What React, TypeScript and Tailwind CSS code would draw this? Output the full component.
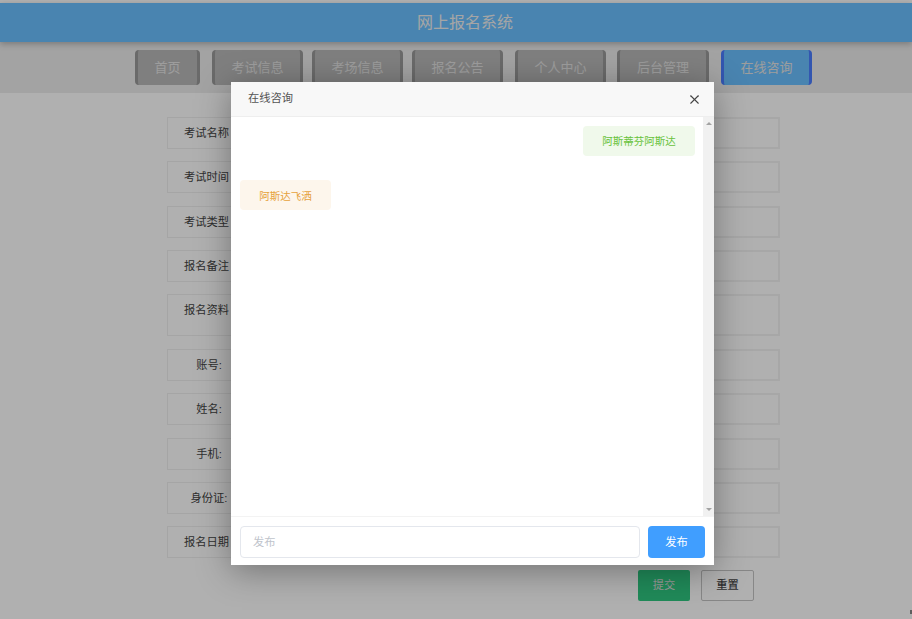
import React from 'react';
import { X } from 'lucide-react';

const navItems = ['首页', '考试信息', '考场信息', '报名公告', '个人中心', '后台管理', '在线咨询'];
const navWidths = ['w-[65px]', 'w-[91px]', 'w-[91px]', 'w-[91px]', 'w-[91px]', 'w-[92px]', 'w-[91px]'];
const navGaps = ['', 'ml-[12px]', 'ml-[9px]', 'ml-[9px]', 'ml-[12px]', 'ml-[11px]', 'ml-[12px]'];

const fields = [
  { label: '考试名称', tall: false },
  { label: '考试时间', tall: false },
  { label: '考试类型', tall: false },
  { label: '报名备注', tall: false },
  { label: '报名资料', tall: true },
  { label: '账号:', tall: false },
  { label: '姓名:', tall: false },
  { label: '手机:', tall: false },
  { label: '身份证:', tall: false },
  { label: '报名日期', tall: false },
];

const FormRow: React.FC<{ label: string; tall: boolean }> = ({ label, tall }) => (
  <div className={`flex w-[613px] ${tall ? 'h-[42px] mb-[13px]' : 'h-[32px] mb-[12.25px]'}`}>
    <div
      className={`w-[83px] shrink-0 border border-r-0 border-[#f0f0f0] flex justify-center text-[11.25px] text-[#444] ${
        tall ? 'pt-[7px]' : 'items-center pt-[1px]'
      } ${label.includes(':') ? '' : 'pr-[5px]'}`}
    >
      {label}
    </div>
    <div className="flex-1 border-2 border-[#f2f2f2] bg-white" />
  </div>
);

export default function App() {
  return (
    <div className="relative h-[619px] w-[912px] overflow-hidden bg-white font-['Liberation_Sans','Noto_Sans_CJK_SC',sans-serif]">
      <div className="h-[3px]" />
      <header className="relative z-10 flex h-[39px] items-center justify-center bg-[#6bc0ff] pl-[18px] text-[16px] text-[#f0f0f0] shadow-[0_2px_6px_rgba(0,0,0,0.25)]">
        网上报名系统
      </header>

      <nav className="flex h-[51px] bg-[#ececec] pl-[135px] pt-[8px]">
        {navItems.map((item, i) => (
          <button
            key={item}
            className={`h-[35px] rounded-[4px] border-x-[3px] text-[13px] text-[#e4e4e4] ${navWidths[i]} ${navGaps[i]} ${
              i === 6 ? 'border-[#4a7dff] bg-[#6bc0ff]' : 'border-[#9a9a9a] bg-[#b9b9b9]'
            }`}
          >
            {item}
          </button>
        ))}
      </nav>

      <main className="pl-[167px] pt-[24px]">
        {fields.map((f) => (
          <FormRow key={f.label} label={f.label} tall={f.tall} />
        ))}
        <div className="flex pl-[471px]">
          <button className="h-[31px] w-[52px] rounded-[2px] bg-[#2fc982] text-[11.25px] text-[#dddddd]">提交</button>
          <button className="ml-[11px] h-[31px] w-[53px] rounded-[2px] border border-[#c4c4c4] text-[11.25px] font-medium text-[#444]">重置</button>
        </div>
      </main>
      <span className="absolute right-0 top-[610px] h-[4px] w-[2px] bg-[#888]" />

      {/* overlay + dialog */}
      <div className="absolute inset-0 z-20 bg-black/[0.31]" />
      <div className="absolute left-[231px] top-[81.5px] z-30 flex h-[483.5px] w-[483px] flex-col bg-white shadow-[0_6px_32px_rgba(0,0,0,0.35)]">
        <div className="flex h-[35px] shrink-0 items-center justify-between border-b border-[#eeeeee] bg-[#f8f8f8] pl-[17px] pr-[12px] text-[11.25px] text-[#555]">
          <span>在线咨询</span>
          <X size={15} strokeWidth={1.7} className="mt-[1px] text-[#444]" />
        </div>

        <div className="flex min-h-0 flex-1">
          <div className="min-w-0 flex-1">
            <div className="flex justify-end pr-[8px] pt-[9px]">
              <div className="flex h-[30px] w-[112px] items-center justify-center rounded-[4px] bg-[#f0f9eb] pt-[3px] text-[10.5px] text-[#67c23a]">
                阿斯蒂芬阿斯达
              </div>
            </div>
            <div className="pl-[9px] pt-[24px]">
              <div className="flex h-[30px] w-[91px] items-center justify-center rounded-[4px] bg-[#fdf6ec] pt-[4px] text-[10.5px] text-[#e6a23c]">
                阿斯达飞洒
              </div>
            </div>
          </div>
          <div className="flex w-[11px] shrink-0 flex-col items-center justify-between bg-[#f1f1f1] py-[5px]">
            <span className="h-0 w-0 border-x-[3px] border-b-[3px] border-x-transparent border-b-[#a3a3a3]" />
            <span className="h-0 w-0 border-x-[3px] border-t-[3px] border-x-transparent border-t-[#a3a3a3]" />
          </div>
        </div>

        <div className="flex h-[49px] shrink-0 items-start border-t border-[#f3f3f3] pl-[9px] pt-[9px]">
          <div className="flex h-[32px] w-[400px] items-center rounded-[4px] border border-[#e4e7ed] pl-[12px] pt-[1px] text-[11.25px] text-[#c0c4cc]">
            发布
          </div>
          <button className="ml-[8px] h-[32px] w-[57px] rounded-[4px] bg-[#409eff] pt-[1px] text-[11.25px] text-white">发布</button>
        </div>
      </div>
    </div>
  );
}
